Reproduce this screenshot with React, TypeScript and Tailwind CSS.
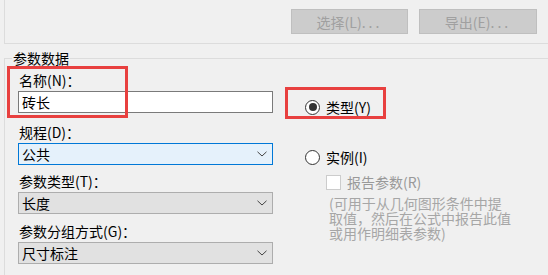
import React from "react";

function Chevron() {
  return (
    <svg width="10" height="6" viewBox="0 0 10 6" className="mr-[5px]">
      <path d="M0.5 0.8 L5 5 L9.5 0.8" fill="none" stroke="#444" strokeWidth="1" />
    </svg>
  );
}

function Dropdown({ value, focused }: { value: string; focused?: boolean }) {
  return (
    <div
      className={
        focused
          ? "mt-[1px] flex h-[22px] w-[255px] items-center justify-between border border-[#0078d7] bg-[#e5f1fb] pl-[3px] text-[14px] text-black"
          : "mt-[1px] flex h-[22px] w-[255px] items-center justify-between border border-[#adadad] bg-[#e1e1e1] pl-[3px] text-[14px] text-black"
      }
    >
      <span className="leading-[20px]">{value}</span>
      <Chevron />
    </div>
  );
}

function Label({ text }: { text: string }) {
  return <div className="h-[20px] pl-[1px] text-[14px] leading-[20px] text-black">{text}</div>;
}

function Radio({ label, checked }: { label: string; checked?: boolean }) {
  return (
    <div className="flex h-[20px] items-center gap-[6px]">
      <span className="flex h-[15px] w-[15px] items-center justify-center rounded-full border border-[#333] bg-white">
        {checked && <span className="h-[8px] w-[8px] rounded-full bg-[#333]" />}
      </span>
      <span className="text-[14px] leading-[20px] text-black">{label}</span>
    </div>
  );
}

export default function App() {
  return (
    <div className="relative h-[275px] w-[548px] overflow-hidden bg-[#f0f0f0] font-['Noto_Sans_CJK_SC',sans-serif]">
      {/* top group */}
      <div className="ml-[4px] flex h-[44px] items-start justify-end gap-[11px] border-b border-l border-[#dcdcdc] pr-[11px] pt-[9px]">
        <button className="h-[25px] w-[117px] border border-[#bfbfbf] bg-[#cccccc] text-[14px] leading-[20px] text-[#a0a0a0]">
          选择(L)<span className="tracking-[3px]">...</span>
        </button>
        <button className="h-[25px] w-[118px] border border-[#bfbfbf] bg-[#cccccc] text-[14px] leading-[20px] text-[#a0a0a0]">
          导出(E)<span className="tracking-[3px]">...</span>
        </button>
      </div>

      <fieldset className="ml-[4px] mt-[6px] border-l border-t border-[#dcdcdc]">
        <legend className="ml-[7px] px-[1px] text-[14px] leading-[16px] text-black">参数数据</legend>
        <div className="flex pl-[13px] pt-[4px]">
          {/* left column */}
          <div className="flex w-[255px] flex-col">
            <Label text="名称(N)：" />
            <div className="mt-[1px] flex h-[22px] w-[255px] items-center border border-[#7a7a7a] bg-white pl-[3px] text-[14px] text-black">
              砖长
            </div>
            <div className="mt-[9px]">
              <Label text="规程(D)：" />
              <Dropdown value="公共" focused />
            </div>
            <div className="mt-[6px]">
              <Label text="参数类型(T)：" />
              <Dropdown value="长度" />
            </div>
            <div className="mt-[7px]">
              <Label text="参数分组方式(G)：" />
              <Dropdown value="尺寸标注" />
            </div>
            <div className="mt-[7px]">
              <Label text="工具提示说明：" />
            </div>
          </div>

          {/* right column */}
          <div className="ml-[32px] mt-[27px] flex flex-col">
            <Radio label="类型(Y)" checked />
            <div className="mt-[30px]">
              <Radio label="实例(I)" />
            </div>
            <div className="ml-[21px] mt-[5px] flex h-[20px] items-center gap-[6px]">
              <span className="h-[15px] w-[15px] border border-[#cccccc] bg-white" />
              <span className="text-[14px] leading-[20px] text-[#999999]">报告参数(R)</span>
            </div>
            <div className="ml-[24px] mt-[4px] whitespace-nowrap text-[14px] leading-[15px] text-[#a6a6a6]">
              (可用于从几何图形条件中提
              <br />
              取值，然后在公式中报告此值
              <br />
              或用作明细表参数)
            </div>
          </div>
        </div>
      </fieldset>

      {/* annotation boxes */}
      <div className="pointer-events-none absolute left-[7px] top-[66px] h-[52px] w-[121px] border-[3px] border-[#e8403f]" />
      <div className="pointer-events-none absolute left-[285px] top-[87px] h-[32px] w-[101px] border-[3px] border-[#e8403f]" />
    </div>
  );
}
